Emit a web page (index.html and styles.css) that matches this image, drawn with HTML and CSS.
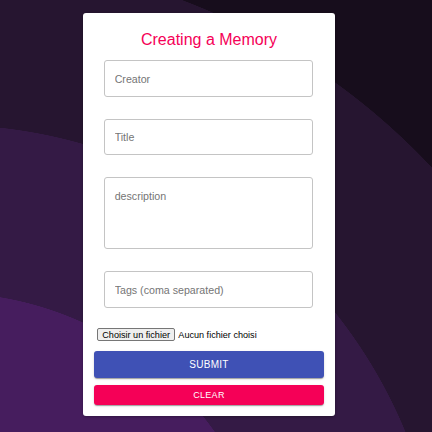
FILE: index.html
```html
<!DOCTYPE html>
<html lang="fr">
<head>
<meta charset="utf-8">
<title>Creating a Memory</title>
<link rel="stylesheet" href="styles.css">
</head>
<body>
  <form class="card" autocomplete="off">
    <h5 class="card-title">Creating a Memory</h5>
    <input class="field field-creator" type="text" placeholder="Creator">
    <input class="field field-title" type="text" placeholder="Title">
    <textarea class="field field-desc" placeholder="description"></textarea>
    <input class="field field-tags" type="text" placeholder="Tags (coma separated)">
    <div class="file-row">
      <span class="file-btn">Choisir un fichier</span>
      <span class="file-name">Aucun fichier choisi</span>
    </div>
    <button class="btn btn-submit" type="button">SUBMIT</button>
    <button class="btn btn-clear" type="button">CLEAR</button>
  </form>
</body>
</html>
```
FILE: styles.css
```css
html, body {
  margin: 0;
  padding: 0;
  height: 100%;
}
body {
  overflow: hidden;
  font-family: "Liberation Sans", Arial, sans-serif;
  background: radial-gradient(circle at -54px 622px,
    #461d5e 0, #461d5e 329px,
    #341a45 329.5px, #341a45 497px,
    #261530 497.5px, #261530 665px,
    #170d1c 665.5px);
}
.card {
  box-sizing: border-box;
  width: 252px;
  margin: 13px 0 0 83px;
  padding: 16px 10.67px 11px;
  background: #fff;
  border-radius: 3px;
  box-shadow: 0 1px 3px rgba(0,0,0,0.3);
  display: flex;
  flex-direction: column;
}
.card-title {
  margin: 0;
  font-size: 16px;
  line-height: 21.33px;
  font-weight: 400;
  text-align: center;
  color: #f50057;
}
.field {
  box-sizing: border-box;
  display: block;
  width: 209px;
  margin: 22px 0 0 10.67px;
  padding: 12.33px 9.33px;
  border: 1px solid #c4c4c4;
  border-radius: 3px;
  font-family: "Liberation Sans", Arial, sans-serif;
  font-size: 10.67px;
  line-height: 10.67px;
  color: rgba(0,0,0,0.87);
  background: #fff;
  outline: none;
}
.field::placeholder {
  color: #757575;
  opacity: 1;
}
.field-creator { margin-top: 10px; height: 37px; }
.field-title { height: 36px; }
.field-desc { height: 72px; resize: none; overflow: hidden; }
.field-tags { height: 37px; }
.file-row {
  display: flex;
  align-items: center;
  gap: 3px;
  margin: 20px 0 0 3.33px;
  font-size: 9.1px;
  color: #000;
}
.file-btn {
  box-sizing: border-box;
  height: 12.5px;
  padding: 0 4.3px;
  display: flex;
  align-items: center;
  border: 1px solid #767676;
  border-radius: 2px;
  background: #efefef;
}
.btn {
  display: block;
  width: 100%;
  border: 0;
  border-radius: 3px;
  color: #fff;
  font-family: "Liberation Sans", Arial, sans-serif;
  font-weight: 400;
  letter-spacing: 0.02857em;
  box-shadow: 0 2px 1px -1px rgba(0,0,0,0.2), 0 1px 1px 0 rgba(0,0,0,0.14), 0 1px 3px 0 rgba(0,0,0,0.12);
  padding: 0;
  cursor: pointer;
}
.btn-submit {
  margin-top: 10.2px;
  height: 27px;
  font-size: 10px;
  background: #3f51b5;
}
.btn-clear {
  margin-top: 7px;
  height: 20px;
  font-size: 9px;
  background: #f50057;
}
```
